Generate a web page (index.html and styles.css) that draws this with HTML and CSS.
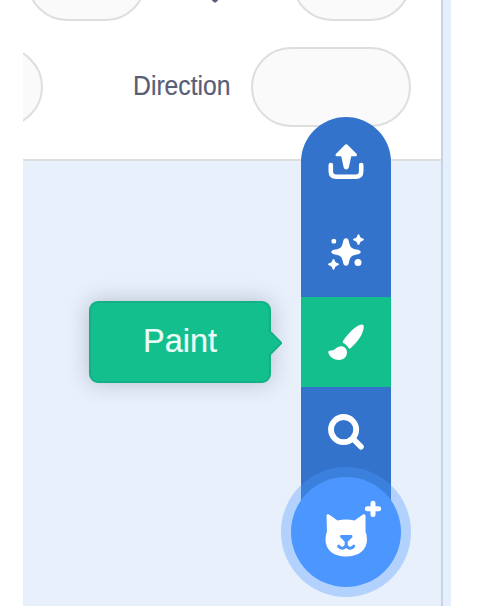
FILE: index.html
```html
<!DOCTYPE html>
<html lang="en">
<head>
<meta charset="utf-8">
<title>Sprite pane</title>
<link rel="stylesheet" href="styles.css">
</head>
<body>
<main class="workspace">
  <section class="target-pane">
    <div class="sprite-info">
      <div class="row">
        <span class="field field-size"></span>
        <svg class="axis-icon" viewBox="0 0 12 42"><path d="M6 0v38M0.500 34L6 39.500L11.500 34" fill="none" stroke="#575e75" stroke-width="4" stroke-linecap="round" stroke-linejoin="round"/></svg>
        <span class="field field-y"></span>
      </div>
      <div class="row">
        <span class="field field-left"></span>
        <label class="label"><span class="label-text">Direction</span></label>
        <span class="field field-direction"></span>
      </div>
    </div>
    <nav class="action-menu">
      <div class="more-buttons">
        <button class="item" aria-label="Upload">
          <svg viewBox="0 0 90 90"><path d="M29.800 48v6.200q0 5.500 5.500 5.500h19.400q5.500 0 5.500-5.500v-6.200" fill="none" stroke="#fff" stroke-width="4.600" stroke-linecap="round"/><path d="M45 27.200Q45.800 27 46.500 27.700L55.800 37Q56.700 38.800 54.800 39.300H50.300L47.800 50.500Q47 52.500 45.200 52.500Q43.300 52.500 42.700 50.500L40.200 39.300H35.800Q33.800 38.800 34.900 37L44 27.700Z" fill="#fff"/></svg>
        </button>
        <button class="item" aria-label="Surprise">
          <svg viewBox="0 0 90 90" fill="#fff"><path d="M45 31.200q2.300 0 2.900 3.200q1 5.200 3.100 6.600t6.200 1.800q2.600.7 2.600 2.200q0 1.500-2.600 2.200q-4.100.4-6.200 1.800t-3.100 6.600q-.6 3.200-2.900 3.200q-2.300 0-2.900-3.200q-1-5.200-3.100-6.600t-6.200-1.800q-2.600-.7-2.600-2.200q0-1.500 2.600-2.200q4.100-.4 6.200-1.800t3.100-6.600q.6-3.200 2.900-3.200Z"/><path d="M57.500 27.200q1 0 1.400 2q.4 1.600 2.100 2q2 .4 2 1.300t-2 1.400q-1.700.5-2.100 2.100q-.4 1.900-1.400 1.900t-1.400-1.900q-.4-1.600-2.100-2.100q-2-.5-2-1.400t2-1.300q1.700-.4 2.100-2q.4-2 1.400-2ZM32.500 52q1 0 1.400 2q.4 1.600 2.100 2q2 .4 2 1.300t-2 1.400q-1.700.5-2.100 2.100q-.4 1.900-1.400 1.900t-1.400-1.900q-.4-1.600-2.100-2.100q-2-.5-2-1.400t2-1.300q1.700-.4 2.100-2q.4-2 1.400-2Z"/><rect x="30.500" y="32" width="4.600" height="4.400" rx="1.500"/><circle cx="57" cy="55.500" r="3.500"/></svg>
        </button>
        <button class="item item-active" aria-label="Paint">
          <svg viewBox="0 0 90 90" fill="#fff"><path d="M61.500 27.500C63.200 28 62.800 30.500 62.500 32C61 39 56 45.500 49.500 51.200Q48.500 52 47.700 51.200Q45 46.800 42 46Q41.200 45 42 44C46.500 37.500 52 31 58 28.200Q60 27.200 61.500 27.500Z"/><path d="M45.800 53.500C47 59 43 63 38 63C33 63 28 59.500 27.300 55.500Q27 53.300 30 53.500Q32.500 53.900 34.500 51.800C38 47.700 44.300 48.500 45.800 53.500Z"/></svg>
          <span class="tooltip">Paint</span>
        </button>
        <button class="item" aria-label="Choose a Sprite">
          <svg viewBox="0 0 90 90" fill="none" stroke="#fff"><circle cx="42.600" cy="42.600" r="12.600" stroke-width="5.800"/><path d="M52.500 52.300L60 59.800" stroke-width="5.600" stroke-linecap="round"/></svg>
        </button>
      </div>
      <button class="main-button" aria-label="Add sprite">
        <svg viewBox="0 0 110 110"><path d="M35.500 38.500Q36 36.500 38 37.500L46.500 43.500Q55 41.500 63.500 43.500L72 37.500Q74.300 36.500 74.500 39V54.500Q76 58 76 62.500C76 73 67.500 79.500 55 79.500S34.500 73 34.500 62.500Q34.500 58 36 54Z" fill="#fff"/><path d="M50 58h10.500q1.600.6.700 2.200l-4.200 4.300h-3.500l-4.200-4.300q-.9-1.600.7-2.200Z" fill="#4c97ff"/><path d="M55.200 63v4.500M47.600 69.200q1.800 2.500 4.700 1.800q2.500-.7 2.900-3.500q.4 2.800 2.900 3.500q2.900.7 4.700-1.800" fill="none" stroke="#4c97ff" stroke-width="3" stroke-linecap="round" stroke-linejoin="round"/><path d="M82 26.200V37.400M76.400 31.800H87.600" stroke="#fff" stroke-width="5" stroke-linecap="round"/></svg>
      </button>
    </nav>
  </section>
</main>
</body>
</html>
```

FILE: styles.css
```css
* { box-sizing: border-box; }

body {
  margin: 0;
  background: #fff;
  font-family: "Liberation Sans", Arial, sans-serif;
}

.workspace {
  width: 428px;
  height: 606px;
  margin-left: 23px;
  padding-right: 8px;
  background: #e5f0ff;
  overflow: hidden;
}

.target-pane {
  position: relative;
  height: 606px;
  border-right: 2px solid #c9d3e2;
  background: #e8f0fc;
}

.sprite-info {
  display: flex;
  flex-direction: column;
  justify-content: flex-end;
  gap: 26px;
  height: 161px;
  padding-bottom: 32px;
  border-bottom: 2px solid #dedede;
  background: #fff;
  overflow: hidden;
}

.row {
  display: flex;
  flex-shrink: 0;
  align-items: center;
  height: 80px;
  padding-right: 30px;
}

.field {
  flex-shrink: 0;
  height: 80px;
  border: 2px solid #dedede;
  border-radius: 40px;
  background: #fafafa;
}

.field-size {
  width: 119px;
  margin-left: 4px;
}

.axis-icon {
  width: 12px;
  height: 42px;
  margin: 0 auto;
  transform: translate(-4px, 1px);
}

.field-y { width: 119px; }

.field-left {
  width: 160px;
  margin-left: -140px;
}

.label {
  flex: 1;
  padding-right: 20px;
  color: #575e75;
  font-size: 27px;
  line-height: 30px;
  text-align: right;
}

.label-text {
  display: inline-block;
  transform: translateY(-1px) scaleX(0.915);
  transform-origin: right;
  -webkit-text-stroke: 0.2px #575e75;
}

.field-direction { width: 160px; }

.action-menu {
  position: absolute;
  top: 117px;
  right: 30px;
  display: flex;
  flex-direction: column;
  align-items: center;
  width: 130px;
}

.more-buttons {
  width: 90px;
  height: 384px;
  border-radius: 45px 45px 0 0;
  background: #3373cc;
}

button {
  display: block;
  padding: 0;
  border: 0;
  background: none;
  font: inherit;
}

.item {
  position: relative;
  width: 90px;
  height: 90px;
}

.item-active { background: #12bf8d; }

svg {
  display: block;
  width: 100%;
  height: 100%;
}

.tooltip {
  position: absolute;
  top: 4px;
  right: 120px;
  width: 182px;
  height: 82px;
  border: 2px solid #12b083;
  border-radius: 9px;
  background: #12bf8d;
  box-shadow: 0 0 22px rgba(40, 45, 70, 0.26);
  color: #ecfbf6;
  font-size: 32.5px;
  line-height: 77px;
  text-align: center;
  -webkit-text-stroke: 0.2px #ecfbf6;
}

.tooltip::after {
  content: "";
  position: absolute;
  top: 30px;
  right: -10px;
  width: 18px;
  height: 18px;
  border-top: 2px solid #12b083;
  border-right: 2px solid #12b083;
  border-radius: 0 3px 0 0;
  background: #12bf8d;
  transform: rotate(45deg);
}

.main-button {
  position: relative;
  width: 110px;
  height: 110px;
  margin-top: -24px;
  border-radius: 50%;
  background: #4c97ff;
  box-shadow: 0 0 0 10px rgba(76, 151, 255, 0.35);
}
```
